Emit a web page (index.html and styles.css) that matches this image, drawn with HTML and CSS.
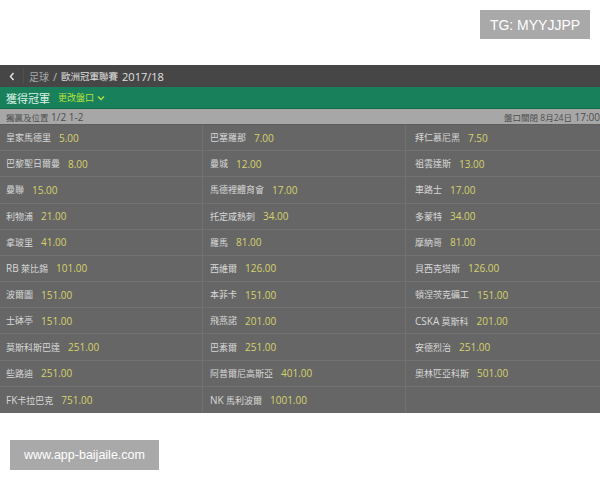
FILE: index.html
```html
<!DOCTYPE html>
<html lang="zh-Hant">
<head>
<meta charset="utf-8">
<link rel="stylesheet" href="styles.css">
</head>
<body>
<div class="top"><div class="tg">TG: MYYJJPP</div></div>
<div class="app">
  <div class="crumb">
    <span class="back"><svg width="6" height="9" viewBox="0 0 6 9"><path d="M4.5 1 L1.5 4.5 L4.5 8" fill="none" stroke="#e6e6e6" stroke-width="1.4"/></svg></span>
    <span class="vsep"></span>
    <span class="c1">足球</span><span class="slash">/</span><span class="c2">歐洲冠軍聯賽</span><span class="c3">2017/18</span>
  </div>
  <div class="market">
    <span class="title">獲得冠軍</span>
    <span class="change">更改盤口<svg width="8" height="6" viewBox="0 0 8 6"><path d="M1 1.5 L4 4.5 L7 1.5" fill="none" stroke="#b9e23c" stroke-width="1.3"/></svg></span>
  </div>
  <div class="sub">
    <span><span class="cj">獨贏及位置</span> 1/2 1-2</span>
    <span><span class="cj">盤口關閉 8月24日</span> 17:00</span>
  </div>
  <div class="grid">
    <div class="cell"><span class="name">皇家馬德里</span><span class="odd">5.00</span></div>
    <div class="cell"><span class="name">巴塞羅那</span><span class="odd">7.00</span></div>
    <div class="cell"><span class="name">拜仁慕尼黑</span><span class="odd">7.50</span></div>
    <div class="cell"><span class="name">巴黎聖日爾曼</span><span class="odd">8.00</span></div>
    <div class="cell"><span class="name">曼城</span><span class="odd">12.00</span></div>
    <div class="cell"><span class="name">祖雲達斯</span><span class="odd">13.00</span></div>
    <div class="cell"><span class="name">曼聯</span><span class="odd">15.00</span></div>
    <div class="cell"><span class="name">馬德裡體育會</span><span class="odd">17.00</span></div>
    <div class="cell"><span class="name">車路士</span><span class="odd">17.00</span></div>
    <div class="cell"><span class="name">利物浦</span><span class="odd">21.00</span></div>
    <div class="cell"><span class="name">托定咸熱刺</span><span class="odd">34.00</span></div>
    <div class="cell"><span class="name">多蒙特</span><span class="odd">34.00</span></div>
    <div class="cell"><span class="name">拿玻里</span><span class="odd">41.00</span></div>
    <div class="cell"><span class="name">羅馬</span><span class="odd">81.00</span></div>
    <div class="cell"><span class="name">摩納哥</span><span class="odd">81.00</span></div>
    <div class="cell"><span class="name"><span class="lat">RB</span> 萊比錫</span><span class="odd">101.00</span></div>
    <div class="cell"><span class="name">西維爾</span><span class="odd">126.00</span></div>
    <div class="cell"><span class="name">貝西克塔斯</span><span class="odd">126.00</span></div>
    <div class="cell"><span class="name">波爾圖</span><span class="odd">151.00</span></div>
    <div class="cell"><span class="name">本菲卡</span><span class="odd">151.00</span></div>
    <div class="cell"><span class="name">頓涅茨克礦工</span><span class="odd">151.00</span></div>
    <div class="cell"><span class="name">士砵亭</span><span class="odd">151.00</span></div>
    <div class="cell"><span class="name">飛燕諾</span><span class="odd">201.00</span></div>
    <div class="cell"><span class="name"><span class="lat">CSKA</span> 莫斯科</span><span class="odd">201.00</span></div>
    <div class="cell"><span class="name">莫斯科斯巴達</span><span class="odd">251.00</span></div>
    <div class="cell"><span class="name">巴素爾</span><span class="odd">251.00</span></div>
    <div class="cell"><span class="name">安德烈治</span><span class="odd">251.00</span></div>
    <div class="cell"><span class="name">些路迪</span><span class="odd">251.00</span></div>
    <div class="cell"><span class="name">阿普爾尼高斯亞</span><span class="odd">401.00</span></div>
    <div class="cell"><span class="name">奧林匹亞科斯</span><span class="odd">501.00</span></div>
    <div class="cell"><span class="name"><span class="lat">FK</span>卡拉巴克</span><span class="odd">751.00</span></div>
    <div class="cell"><span class="name"><span class="lat">NK</span> 馬利波爾</span><span class="odd">1001.00</span></div>
    <div class="cell"></div>
  </div>
</div>
<div class="site">www.app-baijaile.com</div>
</body>
</html>
```

FILE: styles.css
```css
* { box-sizing: border-box; }
html, body { margin: 0; padding: 0; background: #ffffff; }
body {
  width: 600px;
  height: 480px;
  overflow: hidden;
  font-family: "Open Sans", "Noto Sans", "Noto Sans CJK TC", sans-serif;
}

.top {
  height: 65px;
  display: flex;
  justify-content: flex-end;
  align-items: flex-start;
}
.tg {
  margin: 10px 10px 0 0;
  width: 110px;
  height: 29px;
  background: #a9a9a9;
  color: #ffffff;
  font-family: "Liberation Sans", sans-serif;
  font-size: 14px;
  display: flex;
  align-items: center;
  justify-content: center;
}

.app { width: 600px; }

.crumb {
  height: 22px;
  background: #464646;
  display: flex;
  align-items: center;
  color: #dcdcdc;
  font-size: 11px;
}
.back { width: 23px; display: flex; justify-content: center; padding-left: 1px; }
.back svg { display: block; }
.vsep { width: 1px; height: 16px; background: #505050; margin-right: 5px; }
.c1 { color: #a9a9a9; font-size: 10px; }
.slash { color: #bbbbbb; margin: 0 4px; }
.c2 { font-size: 9.5px; color: #e0e0e0; }
.c3 { margin-left: 4px; color: #e0e0e0; }

.market {
  height: 22px;
  background: #19805c;
  border-bottom: 1px solid #126a4a;
  display: flex;
  align-items: center;
  padding-left: 6px;
}
.title { color: #dff3e6; font-size: 11px; }
.change {
  margin-left: 8px;
  color: #b9e23c;
  font-size: 9px;
  display: flex;
  align-items: center;
  gap: 3px;
}
.change svg { display: block; }

.sub {
  height: 15px;
  background: #a7a7a7;
  display: flex;
  justify-content: space-between;
  align-items: center;
  padding: 0 0 0 6px;
  color: #4e4e4e;
  font-size: 10px;
  white-space: nowrap;
  overflow: hidden;
}
.sub .cj { font-size: 8.5px; }

.grid {
  height: 289px;
  background: #666666;
  display: grid;
  grid-template-columns: 203px 203px 1fr;
  grid-template-rows: repeat(11, 1fr);
  border-top: 1px solid #5e5e5e;
}
.cell {
  display: flex;
  align-items: center;
  gap: 8px;
  padding-left: 6px;
  border-bottom: 1px solid #727272;
  white-space: nowrap;
}
.cell:nth-child(3n+1), .cell:nth-child(3n+2) { border-right: 1px solid #717171; }
.cell:nth-child(3n+2) { padding-left: 7px; }
.cell:nth-child(3n) { padding-left: 9px; }
.cell:nth-last-child(-n+3) { border-bottom: none; }
.name { color: #d8d8d8; font-size: 9px; }
.name .lat { font-size: 10px; }
.odd { color: #d8d36a; font-size: 10px; }

.site {
  margin: 27px 0 0 10px;
  width: 149px;
  height: 30px;
  background: #a9a9a9;
  color: #ffffff;
  font-family: "Liberation Sans", sans-serif;
  font-size: 12.5px;
  display: flex;
  align-items: center;
  justify-content: center;
}
```
